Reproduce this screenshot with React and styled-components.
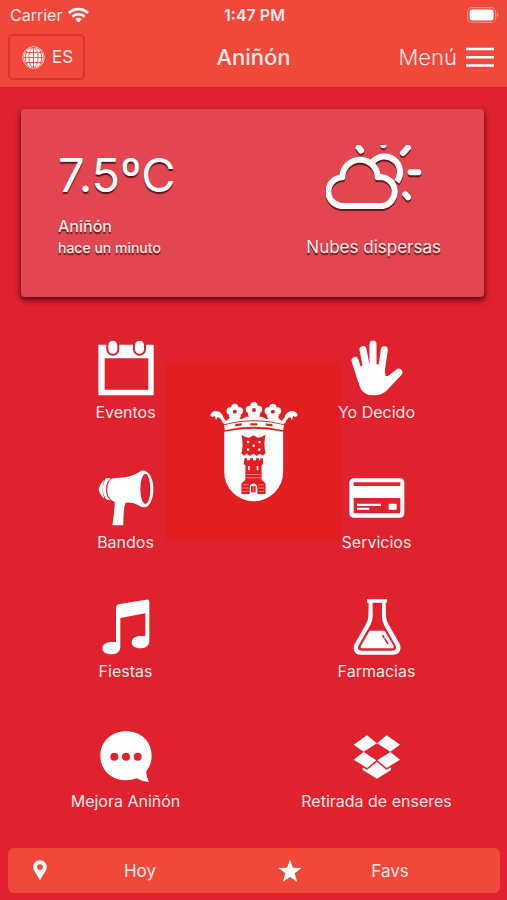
import React from "react";
import styled, { createGlobalStyle, css } from "styled-components";

const RED = "#e0212e";

const GlobalStyle = createGlobalStyle`
  * {
    box-sizing: border-box;
  }
  body {
    margin: 0;
    background: ${RED};
    color: #ffe9e6;
    font-family: Inter, "Liberation Sans", sans-serif;
  }
  button {
    font: inherit;
    color: inherit;
    background: none;
    border: 0;
    padding: 0;
    cursor: pointer;
  }
  svg {
    display: block;
  }
`;

const Page = styled.div`
  min-height: 100vh;
  display: flex;
  flex-direction: column;
`;

const Header = styled.header`
  background: #f0483b;
  height: 87px;
`;

const ThreeColumns = css`
  display: grid;
  grid-template-columns: 1fr auto 1fr;
  align-items: center;
`;

const StatusBar = styled.div`
  ${ThreeColumns}
  height: 30px;
  padding: 0 8px 0 10px;
  font-size: 16px;
`;

const Carrier = styled.div`
  display: flex;
  align-items: center;
  gap: 6px;
`;

const Time = styled.div`
  font-weight: 600;
`;

const End = styled.div`
  justify-self: end;
`;

const NavBar = styled.nav`
  ${ThreeColumns}
  padding: 4px 8px 0;
`;

const Language = styled.button`
  && {
    justify-self: start;
    display: flex;
    align-items: center;
    gap: 7px;
    height: 46px;
    padding: 0 10px 0 12px;
    border: 2px solid #e52f2c;
    border-radius: 5px;
    font-size: 17px;
  }
`;

const Title = styled.h1`
  margin: 0;
  font-size: 22px;
  font-weight: 500;
`;

const Menu = styled.button`
  && {
    justify-self: end;
    display: flex;
    align-items: center;
    gap: 9px;
    padding-right: 5px;
    font-size: 22px;
    font-weight: 300;
  }
`;

const Weather = styled.section`
  display: flex;
  justify-content: space-between;
  height: 188px;
  margin: 22px 23px 0 21px;
  padding: 36px 43px 0 37px;
  background: #e24751;
  border-radius: 4px;
  box-shadow: 0 3px 5px 1px rgba(70, 0, 10, 0.7);
  text-shadow: 0 2px 1px rgba(60, 10, 15, 0.8);
`;

const Temperature = styled.div`
  color: #fff;
  font-size: 47px;
  line-height: 60px;
`;

const Place = styled.div`
  margin-top: 9px;
  font-size: 16px;
  font-weight: 500;
  line-height: 24px;
`;

const Updated = styled.div`
  font-size: 14px;
  font-weight: 500;
  line-height: 20px;
`;

const Sky = styled.div`
  display: flex;
  flex-direction: column;
  align-items: center;
  font-size: 17px;
  line-height: 24px;
  svg {
    margin-bottom: 24px;
    filter: drop-shadow(0 2px 0 rgba(70, 15, 20, 0.8));
  }
`;

const Tiles = styled.main`
  flex: 1;
  display: grid;
  grid-template-columns: 1fr 1fr;
  grid-template-rows: repeat(4, 1fr);
  margin-top: 25px;
  padding-right: 5px;
`;

const Tile = styled.button`
  && {
    grid-column: ${props => props.$column};
    grid-row: ${props => props.$row};
    display: flex;
    flex-direction: column;
    align-items: center;
    padding-top: 18px;
    font-size: 16px;
    line-height: 20px;
  }
`;

const TileIcon = styled.span`
  display: flex;
  align-items: center;
  height: 56px;
  margin-bottom: 6px;
`;

const CrestBox = styled.div`
  grid-column: 1 / 3;
  grid-row: 1 / 3;
  place-self: center;
  width: 175px;
  height: 180px;
  margin-right: -5px;
  display: flex;
  align-items: center;
  justify-content: center;
  background: #e31e23;
`;

const Footer = styled.footer`
  display: grid;
  grid-template-columns: 1fr 1fr;
  column-gap: 8px;
  height: 45px;
  margin: 8px 7px 7px 8px;
  background: #f0483b;
  border-radius: 6px;
`;

const FooterButton = styled.button`
  && {
    display: grid;
    grid-template-columns: 64px 1fr;
    align-items: center;
    padding-right: 42px;
    font-size: 17px;
    svg {
      justify-self: center;
    }
  }
`;

const WifiIcon = () => (
  <svg width="21" height="16" viewBox="0 0 21 16" fill="none" stroke="#fff" strokeWidth="2.7">
    <path d="M1 6a13.4 13.4 0 0 1 19 0" />
    <path d="M4.4 9.7a8.6 8.6 0 0 1 12.2 0" />
    <path d="M10.5 15.4 7.3 12.2a4.5 4.5 0 0 1 6.4 0z" fill="#fff" stroke="none" />
  </svg>
);

const BatteryIcon = () => (
  <svg width="33" height="16" viewBox="0 0 33 16">
    <rect x="1.6" y="0.6" width="28" height="14.8" rx="4.5" fill="none" stroke="#f58a80" strokeWidth="1.1" />
    <rect x="3.6" y="2.6" width="24" height="10.8" rx="2.6" fill="#fff" />
    <path d="M31 5.6c1.6.6 1.6 4.2 0 4.8z" fill="#f58a80" />
  </svg>
);

const GlobeIcon = () => (
  <svg width="23" height="23" viewBox="0 0 23 23">
    <circle cx="11.5" cy="11.5" r="10.8" fill="none" stroke="#fff" strokeWidth=".7" />
    <circle cx="11.5" cy="11.5" r="9.8" fill="#fff" />
    <g fill="none" stroke="#f0483b" strokeWidth="0.9">
      <path d="M11.5 1v21M2 11.5h19M3.5 6.5h16M3.5 16.5h16" />
      <ellipse cx="11.5" cy="11.5" rx="4.6" ry="10" />
      <path d="M5 4.5q-3.2 7 0 14M18 4.5q3.2 7 0 14" />
    </g>
  </svg>
);

const BarsIcon = () => (
  <svg width="28" height="20" viewBox="0 0 28 20" stroke="#fff" strokeWidth="2.4">
    <path d="M0 2h28M0 10.3h28M0 18.5h28" />
  </svg>
);

const CloudSunIcon = () => (
  <svg width="96" height="66" viewBox="215 150 288 198" fill="none" stroke="#fff" strokeWidth="18">
    <path d="M266 333A43 43 0 0 1 264 247A53 53 0 0 1 370 247A43 43 0 1 1 385 333Z" strokeLinejoin="round" />
    <path d="M354 202A46 46 0 0 1 427 260" />
    <path
      d="M313 158l7 9M461 158l-15 16M469 232h23M453 298l8 9M387 150v1"
      strokeLinecap="round"
    />
  </svg>
);

const EventsIcon = () => (
  <svg width="56" height="56" viewBox="113 44 168 168">
    <path d="M114 58H280V210H114ZM133 99V193H264V99Z" fill="#fff" fillRule="evenodd" />
    <g fill="#fff" stroke={RED} strokeWidth="6">
      <rect x="141" y="43" width="33" height="45" rx="16" />
      <rect x="221" y="43" width="33" height="45" rx="16" />
    </g>
  </svg>
);

const MegaphoneIcon = () => (
  <svg width="56" height="56" viewBox="114 432 168 168" fill="#fff">
    <path d="M132 461Q120 473 116 489Q119 507 133 518Q123 489 132 461Z" />
    <path d="M137 457Q143 456 153 457Q139 466 138 488Q138 513 151 522Q142 522 137 519Q119 488 137 457Z" />
    <path d="M150 461Q158 454 180 455Q215 454 238 438Q246 433 253 434C271 438 280 463 280 489C280 520 269 544 253 544Q245 544 238 539Q218 527 197 530Q190 543 190 598H157Q164 555 164 528Q151 522 145 510Q136 483 150 461Z" />
    <ellipse cx="256" cy="489" rx="15" ry="45" fill={RED} />
  </svg>
);

const MusicIcon = () => (
  <svg width="56" height="56" viewBox="115 41 168 168" fill="#fff">
    <path d="M169 68Q169 58 180 56L260 43Q269 41 269 51V166C269 182 256 189 241 189C226 189 216 182 216 171C216 159 227 152 242 152H257V84L182 98V184C182 200 169 207 154 207C139 207 128 200 128 189C128 177 140 170 154 170H169Z" />
  </svg>
);

const ChatIcon = () => (
  <svg width="52" height="52" viewBox="120 436 156 156">
    <path d="M198 437C243 437 275 468 275 510C275 532 268 544 259 556Q258 574 267 589Q244 587 231 578Q214 584 198 584C154 584 121 554 121 510C121 468 155 437 198 437Z" fill="#fff" />
    <g fill={RED}>
      <circle cx="163" cy="513" r="12" />
      <circle cx="198" cy="513" r="12" />
      <circle cx="233" cy="513" r="12" />
    </g>
  </svg>
);

const HandIcon = () => (
  <svg width="52" height="56" viewBox="91 44 156 168" fill="none" stroke="#fff" strokeLinecap="round">
    <path d="M103 105L122 165M127 73L138 130M157 56V130M191 73L182 135" strokeWidth="21" />
    <path d="M234 141L200 168" strokeWidth="22" />
    <path
      d="M107 130L118 124L128 120L148 116H168L192 124Q192 140 195 153Q207 153 228 133L242 149L206 187C194 203 178 210 157 210C136 210 122 200 116 180Z"
      fill="#fff"
      stroke="none"
    />
  </svg>
);

const CardIcon = () => (
  <svg width="56" height="40" viewBox="85 457 168 120">
    <rect x="86" y="458" width="165" height="118" rx="13" fill="#fff" />
    <path d="M99 470H239V481H99ZM99 517H239V558Q239 563 234 563H104Q99 563 99 558Z" fill={RED} />
    <path d="M109 534H181V541H109ZM109 546H146V552H109ZM204 534H228V552H204Z" fill="#fff" />
  </svg>
);

const FlaskIcon = () => (
  <svg width="56" height="56" viewBox="175 41 168 168">
    <path d="M229 42H289V52H285L286 92Q287 106 293 116L326 174Q333 188 326 199Q321 208 307 208H211Q197 208 192 199Q186 189 192 176L226 116Q233 105 233 91L234 52H229ZM246 52V94Q245 108 239 119L203 181Q198 195 214 196H304Q320 195 315 181L280 119Q274 109 274 94V52Z" fill="#fff" fillRule="evenodd" />
    <path d="M237 136H282L309 182Q311 189 303 189H215Q207 189 211 181Z" fill="#fff" />
    <path d="M277 151l2 5M283 161l8 13" stroke={RED} strokeWidth="5" strokeLinecap="round" />
  </svg>
);

const BoxIcon = () => (
  <svg width="48" height="44" viewBox="188 447 144 132" fill="#fff">
    <path d="M230 448L260 472L220 497L190 476ZM289 448L329 476L300 497L260 472ZM220 498L258 523L230 546L190 521ZM300 498L329 521L289 546L261 523Z" />
    <path d="M260 528L288 551L302 544V552L260 578L217 552V544L230 551Z" />
  </svg>
);

const PinIcon = () => (
  <svg width="14" height="21" viewBox="0 0 14 21">
    <path d="M7 .3C3 .3 .3 3.200 .3 6.900C.3 11.500 5 15 7 20.800C9 15 13.700 11.500 13.700 6.900C13.700 3.200 11 .3 7 .3ZM7 4.200A2.900 2.900 0 1 1 7 10A2.900 2.900 0 1 1 7 4.200Z" fill="#fff" fillRule="evenodd" />
  </svg>
);

const StarIcon = () => (
  <svg width="24" height="24" viewBox="0 0 24 24">
    <path d="M12 .5L14.900 8.800L23.500 9L16.700 14.300L19.100 22.800L12 17.900L4.900 22.800L7.300 14.300L.5 9L9.100 8.800Z" fill="#fff" />
  </svg>
);

const flowers = [[135, 92], [193, 87], [250, 92]];

const Crest = () => (
  <svg width="88" height="100" viewBox="60 63 266 302" fill="#fff" role="img" aria-label="Escudo de Aniñón">
    {/* crown */}
    {flowers.map(([x, y]) => (
      <g key={x}>
        <circle cx={x} cy={y - 13} r="11" />
        <circle cx={x - 14} cy={y - 2} r="11" />
        <circle cx={x + 14} cy={y - 2} r="11" />
        <circle cx={x - 8} cy={y + 12} r="10" />
        <circle cx={x + 8} cy={y + 12} r="10" />
        <circle cx={x} cy={y} r="6" fill="#e31e23" />
      </g>
    ))}
    <path d="M61 104Q64 90 77 90Q96 91 101 110L112 124L99 126Q94 112 84 108L78 117L75 105L67 108Z" />
    <path d="M325 104Q322 90 309 90Q290 91 285 110L274 124L287 126Q292 112 302 108L308 117L311 105L319 108Z" />
    <path d="M97 123L111 119Q119 107 135 109Q148 110 155 115Q169 105 193 105Q217 105 231 115Q238 110 251 109Q267 107 275 119L289 123L282 130Q193 106 104 130Z" />
    <path d="M102 133Q193 109 284 133L281 148Q193 128 105 148Z" />
    <path d="M136 130l20-3v7l-20 3zM182 127h21v7h-21zM229 127l20 3v7l-20-3z" fill="#e31e23" />
    {/* shield */}
    <path d="M103 153Q193 134 281 153V275A89 88 0 0 1 103 275Z" />
    {/* tower */}
    <g fill="#e31e23">
      <path d="M155 162Q168 172 179 171L191 163L204 171Q217 170 228 162Q221 191 228 217L220 225L211 219L201 226L191 219L181 226L171 219L162 225L155 217Q162 190 155 162Z" />
      <path d="M164 233H172V239H181V233H190V239H199V233H208V239H212V233H220V250L216 255V298L228 309V341H203V323Q202 310 191 309Q180 310 180 323V341H155V309L167 298V255L162 250Z" />
      <path d="M184 317H198V336H184Z" />
    </g>
    <g fill="#fff">
      <circle cx="175" cy="184" r="4" />
      <circle cx="210" cy="184" r="4" />
      <circle cx="192" cy="195" r="4" />
      <circle cx="175" cy="207" r="4" />
      <circle cx="209" cy="207" r="4" />
      <path d="M175 256h5v13h-5zM201 256h5v13h-5z" />
    </g>
    <path d="M170 282h42M170 292h44M161 313h16M206 313h16M158 323h18M206 323h18M158 333h18M206 333h18M191 317v19" stroke="#f8b5b3" strokeWidth="2" fill="none" />
  </svg>
);

const tiles = [
  { label: "Eventos", Icon: EventsIcon },
  { label: "Yo Decido", Icon: HandIcon },
  { label: "Bandos", Icon: MegaphoneIcon },
  { label: "Servicios", Icon: CardIcon },
  { label: "Fiestas", Icon: MusicIcon },
  { label: "Farmacias", Icon: FlaskIcon },
  { label: "Mejora Aniñón", Icon: ChatIcon },
  { label: "Retirada de enseres", Icon: BoxIcon }
];

export default () => (
  <>
    <GlobalStyle />
    <Page>
      <Header>
        <StatusBar>
          <Carrier>
            Carrier
            <WifiIcon />
          </Carrier>
          <Time>1:47 PM</Time>
          <End>
            <BatteryIcon />
          </End>
        </StatusBar>
        <NavBar>
          <Language>
            <GlobeIcon />
            ES
          </Language>
          <Title>Aniñón</Title>
          <Menu>
            Menú
            <BarsIcon />
          </Menu>
        </NavBar>
      </Header>
      <Weather>
        <div>
          <Temperature>7.5ºC</Temperature>
          <Place>Aniñón</Place>
          <Updated>hace un minuto</Updated>
        </div>
        <Sky>
          <CloudSunIcon />
          Nubes dispersas
        </Sky>
      </Weather>
      <Tiles>
        <CrestBox>
          <Crest />
        </CrestBox>
        {tiles.map(({ label, Icon }, i) => (
          <Tile key={label} $column={(i % 2) + 1} $row={Math.floor(i / 2) + 1}>
            <TileIcon>
              <Icon />
            </TileIcon>
            {label}
          </Tile>
        ))}
      </Tiles>
      <Footer>
        <FooterButton>
          <PinIcon />
          Hoy
        </FooterButton>
        <FooterButton>
          <StarIcon />
          Favs
        </FooterButton>
      </Footer>
    </Page>
  </>
);
